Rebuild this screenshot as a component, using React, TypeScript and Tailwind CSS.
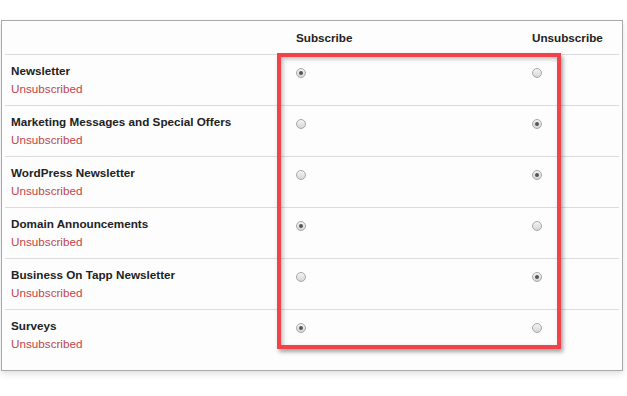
import { FC } from 'react'

type Pref = { name: string; subscribed: boolean }

const prefs: Pref[] = [
  { name: "Newsletter", subscribed: true },
  { name: "Marketing Messages and Special Offers", subscribed: false },
  { name: "WordPress Newsletter", subscribed: false },
  { name: "Domain Announcements", subscribed: true },
  { name: "Business On Tapp Newsletter", subscribed: false },
  { name: "Surveys", subscribed: true },
]

const Radio: FC<{ checked: boolean }> = ({ checked }) => (
  <span className="flex h-[10px] w-[10px] items-center justify-center rounded-full border border-[#a8a8a8] bg-gradient-to-b from-[#f4f4f4] to-[#d6d6d6]">
    {checked && <span className="h-[4px] w-[4px] rounded-full bg-[#555]" />}
  </span>
)

export default function App() {
  return (
    <div className="relative h-[396px] w-[627px] bg-white pt-[20px] font-['Liberation_Sans',Arial,sans-serif] text-[11.7px]">
      <div className="ml-[1px] w-[622px] border border-[#a9a9a9] bg-[#fdfdfd] px-[3px] pb-[9px] shadow-[0_3px_6px_rgba(0,0,0,0.12)]">
        <div className="grid h-[34px] grid-cols-[291px_236px_1fr] border-b border-[#dcdcdc] pt-[8px] font-bold leading-[18px] text-[#222]">
          <div />
          <div>Subscribe</div>
          <div>Unsubscribe</div>
        </div>
        {prefs.map((p, i) => (
          <div
            key={p.name}
            className={`grid h-[51px] grid-cols-[291px_236px_1fr] ${i < prefs.length - 1 ? "border-b border-[#dcdcdc]" : ""}`}
          >
            <div className="pl-[6px] pt-[7px] leading-[18px]">
              <div className="font-bold text-[#222]">{p.name}</div>
              <div className="text-[#c2454b]">Unsubscribed</div>
            </div>
            <div className="pt-[13px]">
              <Radio checked={p.subscribed} />
            </div>
            <div className="pt-[13px]">
              <Radio checked={!p.subscribed} />
            </div>
          </div>
        ))}
      </div>
      {/* highlight box over the radio columns */}
      <div className="pointer-events-none absolute left-[277px] top-[53px] h-[296px] w-[284px] border-4 border-[#f2434b] shadow-[2px_3px_4px_rgba(0,0,0,0.35),inset_2px_2px_4px_rgba(0,0,0,0.25)]" />
    </div>
  )
}
